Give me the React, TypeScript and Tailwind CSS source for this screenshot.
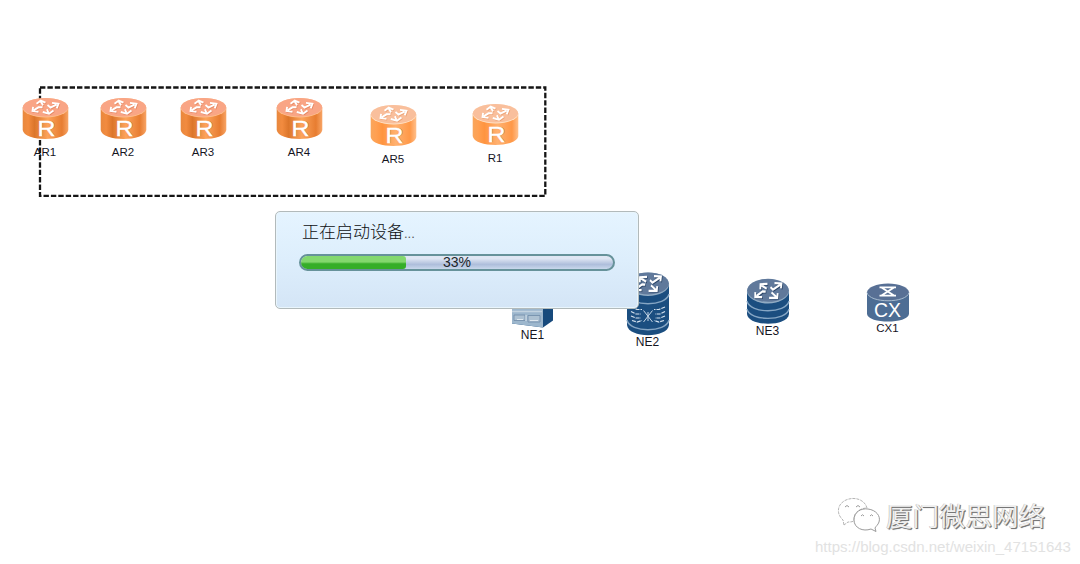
import type { ReactNode } from "react";

interface DeviceProps {
    label: string;
    left: number;
    top: number;
    labelTop: number;
    labelShift?: number;
    large?: boolean;
    width: number;
    children: ReactNode;
}

const ROUTERS = [
    { label: "AR1", left: 22, top: 97, pale: false },
    { label: "AR2", left: 100, top: 97, pale: false },
    { label: "AR3", left: 180, top: 97, pale: false },
    { label: "AR4", left: 276, top: 97, pale: false },
    { label: "AR5", left: 370, top: 104, pale: true },
    { label: "R1", left: 472, top: 103, pale: true },
];

const PROGRESS = 33;

// Arrow strokes on the router lids, in a 30x15 box.
const COMPASS_ARROWS = [
    "M12.6 6 L10.3 2.5 M6 4.4 L10.2 1.5 L15 3.4",
    "M12 7.8 L8 7.8 L3.4 10.4 M2.6 7.4 L2 11.2 L8 12",
    "M17 5.6 L20 8 L26 5.2 M21.5 3.6 L28 4.4 L26.2 8.8",
    "M16.4 9.6 L18 13 M12.3 12.2 L18.5 13.9 L23 10.8",
];
const CORNER_ARROWS = [
    "M13.2 6.2 L8 3.6 M6.8 6.8 L7 2.7 L14 2.3",
    "M17 5 L19.4 7 L27 2.9 M21 1.8 L28 2 L27.4 6",
    "M12.2 8.6 L9.2 8.4 L3 12.2 M1.8 9 L1.7 13 L8.6 13",
    "M18 9.2 L22.8 12.8 M15.6 13.6 L23.8 13.7 L24.2 9.8",
];

interface LidArrowsProps {
    paths: string[];
    x: number;
    y: number;
    h: number;
    shadow: string;
}

function LidArrows({ paths, x, y, h, shadow }: LidArrowsProps) {
    const d = paths.join(" ");
    return (
        <svg x={x} y={y} width={30} height={h} viewBox="0 0 30 15" preserveAspectRatio="none" fill="none" strokeWidth={1.8}>
            <path d={d} stroke={shadow} transform="translate(0.7 0.7)" />
            <path d={d} stroke="#fff" />
        </svg>
    );
}

function Device({ label, left, top, labelTop, labelShift = 0, large, width, children }: DeviceProps) {
    return (
        <div className="absolute" style={{ left, top, width }}>
            {children}
            <span
                className={`absolute left-0 w-full text-center whitespace-nowrap text-[#15151f] leading-[14px] ${large ? "text-[12px]" : "text-[11.5px]"}`}
                style={{ top: labelTop - top, marginLeft: labelShift }}
            >
                {label}
            </span>
        </div>
    );
}

function AccessRouter({ pale, id }: { pale: boolean; id: string }) {
    return (
        <svg width="47" height="43" viewBox="0 0 47 43" className="block">
            <defs>
                <linearGradient id={id}>
                    <stop offset="0" stopColor={pale ? "#f9a65c" : "#e8883e"} />
                    <stop offset="0.12" stopColor={pale ? "#ffa052" : "#f28b3f"} />
                    <stop offset="0.26" stopColor={pale ? "#ff9440" : "#dc762b"} />
                    <stop offset="0.55" stopColor={pale ? "#ffb170" : "#fca35b"} />
                    <stop offset="0.86" stopColor={pale ? "#ff9847" : "#e77d31"} />
                    <stop offset="1" stopColor={pale ? "#ffc08c" : "#f8a566"} />
                </linearGradient>
            </defs>
            <path d="M0.7 10.5 V33 C2 45 45 45 46.3 33 V10.5 Z" fill={`url(#${id})`} />
            <ellipse cx="23.5" cy="10.7" rx="22.8" ry="9.7" fill={pale ? "#ffe0c2" : "#fdbd8c"} />
            <ellipse cx="23.5" cy="10.2" rx="22.6" ry="9.2" fill={pale ? "#f9bf9c" : "#f9a585"} />
            <LidArrows paths={COMPASS_ARROWS} x={8.5} y={2} h={16} shadow={pale ? "#eca274" : "#e58862"} />
            <text x="25.3" y="39.2" textAnchor="middle" fontSize="21.5" fill="#b8601f" textLength="18" lengthAdjust="spacingAndGlyphs">R</text>
            <text x="24.5" y="38.6" textAnchor="middle" fontSize="21.5" fill="#fff" stroke="#fff" strokeWidth="0.4" textLength="18" lengthAdjust="spacingAndGlyphs">R</text>
        </svg>
    );
}

function Ne1() {
    return (
        <svg width="42" height="61" viewBox="0 0 42 61" className="block">
            <path d="M0 10 L10 0 H41 V53.5 L31 60.5 L0 56.5 Z" fill="#174a7c" />
            <path d="M0 10 H31 V60.5 L0 56.5 Z" fill="#9db7cd" />
            <path d="M0 44.5 H30" stroke="#c3d3e0" strokeWidth="1.5" />
            <path d="M2 48 H13 V53.5 H2 Z M16 48.5 H28 V55 H16 Z" fill="#adc1d2" stroke="#6f8ca8" strokeWidth="0.8" />
            <path d="M14 48 V54 M5 52.5 H11 M18 53.5 H26" stroke="#dfe8ef" />
        </svg>
    );
}

function Ne2() {
    return (
        <svg width="44" height="64" viewBox="0 0 44 64" className="block">
            <path d="M1 11 V53 C2 66.5 42 66.5 43 53 V11 Z" fill="#1b4e80" />
            <ellipse cx="22" cy="12.2" rx="21" ry="11.8" fill="#91abc3" />
            <ellipse cx="22" cy="11.4" rx="20.8" ry="11" fill="#60799b" />
            <LidArrows paths={CORNER_ARROWS} x={7} y={2} h={18.5} shadow="#2b4567" />
            <g fill="none" stroke="#86a6c4" strokeWidth="1.4">
                <path d="M1 22 C4 35 40 35 43 22" />
                <path d="M1 48 C4 61 40 61 43 48" />
            </g>
            <g fill="none" stroke="#d5e2ee" strokeWidth="1.2" strokeDasharray="4 1">
                <path d="M5 35 L11 37.5 H16 M5 39.5 L10 42 H15 M5 44 L10 46 H15 M6 48.5 L11 50 L16 48.5" />
                <path d="M39 35 L33 37.5 H28 M39 39.5 L34 42 H29 M39 44 L34 46 H29 M38 48.5 L33 50 L28 48.5" />
            </g>
            <path d="M17.5 38.5 L26.5 50 M26.5 38.5 L17.5 50 M22 40 V49" stroke="#c4d5e5" strokeWidth="1" />
        </svg>
    );
}

function Ne3() {
    return (
        <svg width="44" height="47" viewBox="0 0 44 47" className="block">
            <path d="M1 12 V36 C2 49 42 49 43 36 V12 Z" fill="#1b4e80" />
            <ellipse cx="22" cy="13.2" rx="21" ry="12.2" fill="#91abc3" />
            <ellipse cx="22" cy="12.3" rx="20.8" ry="11.5" fill="#60799b" />
            <LidArrows paths={CORNER_ARROWS} x={7.5} y={3} h={18.5} shadow="#2b4567" />
            <g fill="none" stroke="#86a6c4" strokeWidth="1.3">
                <path d="M1 23 C4 36 40 36 43 23" />
                <path d="M1 31 C4 43.5 40 43.5 43 31" />
            </g>
        </svg>
    );
}

function Cx1() {
    return (
        <svg width="44" height="39" viewBox="0 0 44 39" className="block">
            <path d="M1 9 V31 C2 41 42 41 43 31 V9 Z" fill="#4d6d94" />
            <ellipse cx="22" cy="9.5" rx="21" ry="8.9" fill="#587095" />
            <path d="M1 9.5 C3 20.5 41 20.5 43 9.5" fill="none" stroke="#a6bbcf" strokeWidth="1" />
            <path d="M13.5 4.3 H30 M13.5 12.7 H30 M15.5 4.5 L28 12.5 M28 4.5 L15.5 12.5" fill="none" stroke="#fff" strokeWidth="1.8" />
            <text x="21.5" y="34" textAnchor="middle" fontSize="19.5" fill="#fff" textLength="27" lengthAdjust="spacingAndGlyphs">CX</text>
        </svg>
    );
}

function ProgressDialog() {
    return (
        <div className="absolute left-[275px] top-[211px] w-[364px] h-[98px] rounded-[5px] border border-[#b2babb] bg-gradient-to-b from-[#e5f4ff] via-[#ddeefc] to-[#d4e5f6] px-[23px] pt-[7px] shadow-[inset_0_0_0_1px_#e9f5fc]">
            <div className="h-6 pl-[3px] text-[17px] leading-6 text-[#0c0e10] font-['Noto_Sans_CJK_SC',sans-serif] font-light">
                正在启动设备<span className="font-['Liberation_Sans',sans-serif] text-[13px] text-[#555]">...</span>
            </div>
            <div className="relative mt-[11px] h-[17px] w-[316px] overflow-hidden rounded-full border-2 border-[#66929a] bg-gradient-to-b from-[#dfe6f3] from-20% via-[#aebedb] via-65% to-[#c9d8ec]">
                <div className="h-full bg-gradient-to-b from-[#83d86e] from-45% to-[#35ae28] to-60% rounded-r-[3px]" style={{ width: `${PROGRESS + 0.6}%` }} />
                <span className="absolute inset-0 text-center text-[14px] leading-[13px] text-[#20252a]">{PROGRESS}%</span>
            </div>
        </div>
    );
}

function Watermark() {
    return (
        <div className="absolute left-[815px] top-[497px] w-[258px]">
            <div className="flex items-start h-10 pl-[22px]">
                <svg width="44" height="38" viewBox="0 0 44 38" fill="#fff" stroke="#9a9a9a" strokeWidth="1">
                    <path d="M7 28 L6 23 C-1 17 0 7 9 3 C18 -1 28 3 30 11 C23 11 16 16 17 23 C17 25 13 25 11 25 Z" strokeDasharray="3 1" stroke="#b5b5b5" />
                    <path d="M39 34.5 L34 32 C26 35 17 31 17 23 C17 15 24 11 31 12 C39 13 44 19 42 25 C41 28 39 29 38 31 Z" />
                    <path d="M8 10 q2 -3 4 0 M19 10 q2 -3 4 0 M24 19 q1.5 -2.5 3 0 M33 19 q1.5 -2.5 3 0" fill="none" />
                </svg>
                <span className="pl-[5px] text-[26.5px] leading-[36px] whitespace-nowrap text-[#f0f0f0] [text-shadow:1px_1px_0_#777,1px_1px_1px_#888,-0.5px_-0.5px_0_#bbb] font-['Noto_Sans_CJK_SC',sans-serif]">
                    厦门微思网络
                </span>
            </div>
            <div className="text-[15.05px] leading-5 text-[#e2e2e2] whitespace-nowrap">https://blog.csdn.net/weixin_47151643</div>
        </div>
    );
}

export default function App() {
    return (
        <div className="relative h-[564px] w-[1080px] overflow-hidden bg-white font-['Liberation_Sans',Arial,sans-serif]">
            <svg className="absolute left-[38px] top-[85px]" width="510" height="113" fill="none">
                <rect x="2" y="2.5" width="505.3" height="108.3" stroke="#151515" strokeWidth="2.3" strokeDasharray="5.4 2" />
            </svg>
            {ROUTERS.map((r) => (
                <Device key={r.label} label={r.label} left={r.left} top={r.top} width={47} labelTop={r.top + 48} labelShift={-0.5}>
                    <AccessRouter pale={r.pale} id={`body-${r.label}`} />
                </Device>
            ))}
            <Device label="NE1" left={512} top={267} width={42} labelTop={328} labelShift={-0.5} large>
                <Ne1 />
            </Device>
            <Device label="NE2" left={626} top={272} width={44} labelTop={335} labelShift={-0.5} large>
                <Ne2 />
            </Device>
            <Device label="NE3" left={746} top={278} width={44} labelTop={324} labelShift={-0.5} large>
                <Ne3 />
            </Device>
            <Device label="CX1" left={866} top={283} width={44} labelTop={321} labelShift={-0.5}>
                <Cx1 />
            </Device>
            <ProgressDialog />
            <Watermark />
        </div>
    );
}
